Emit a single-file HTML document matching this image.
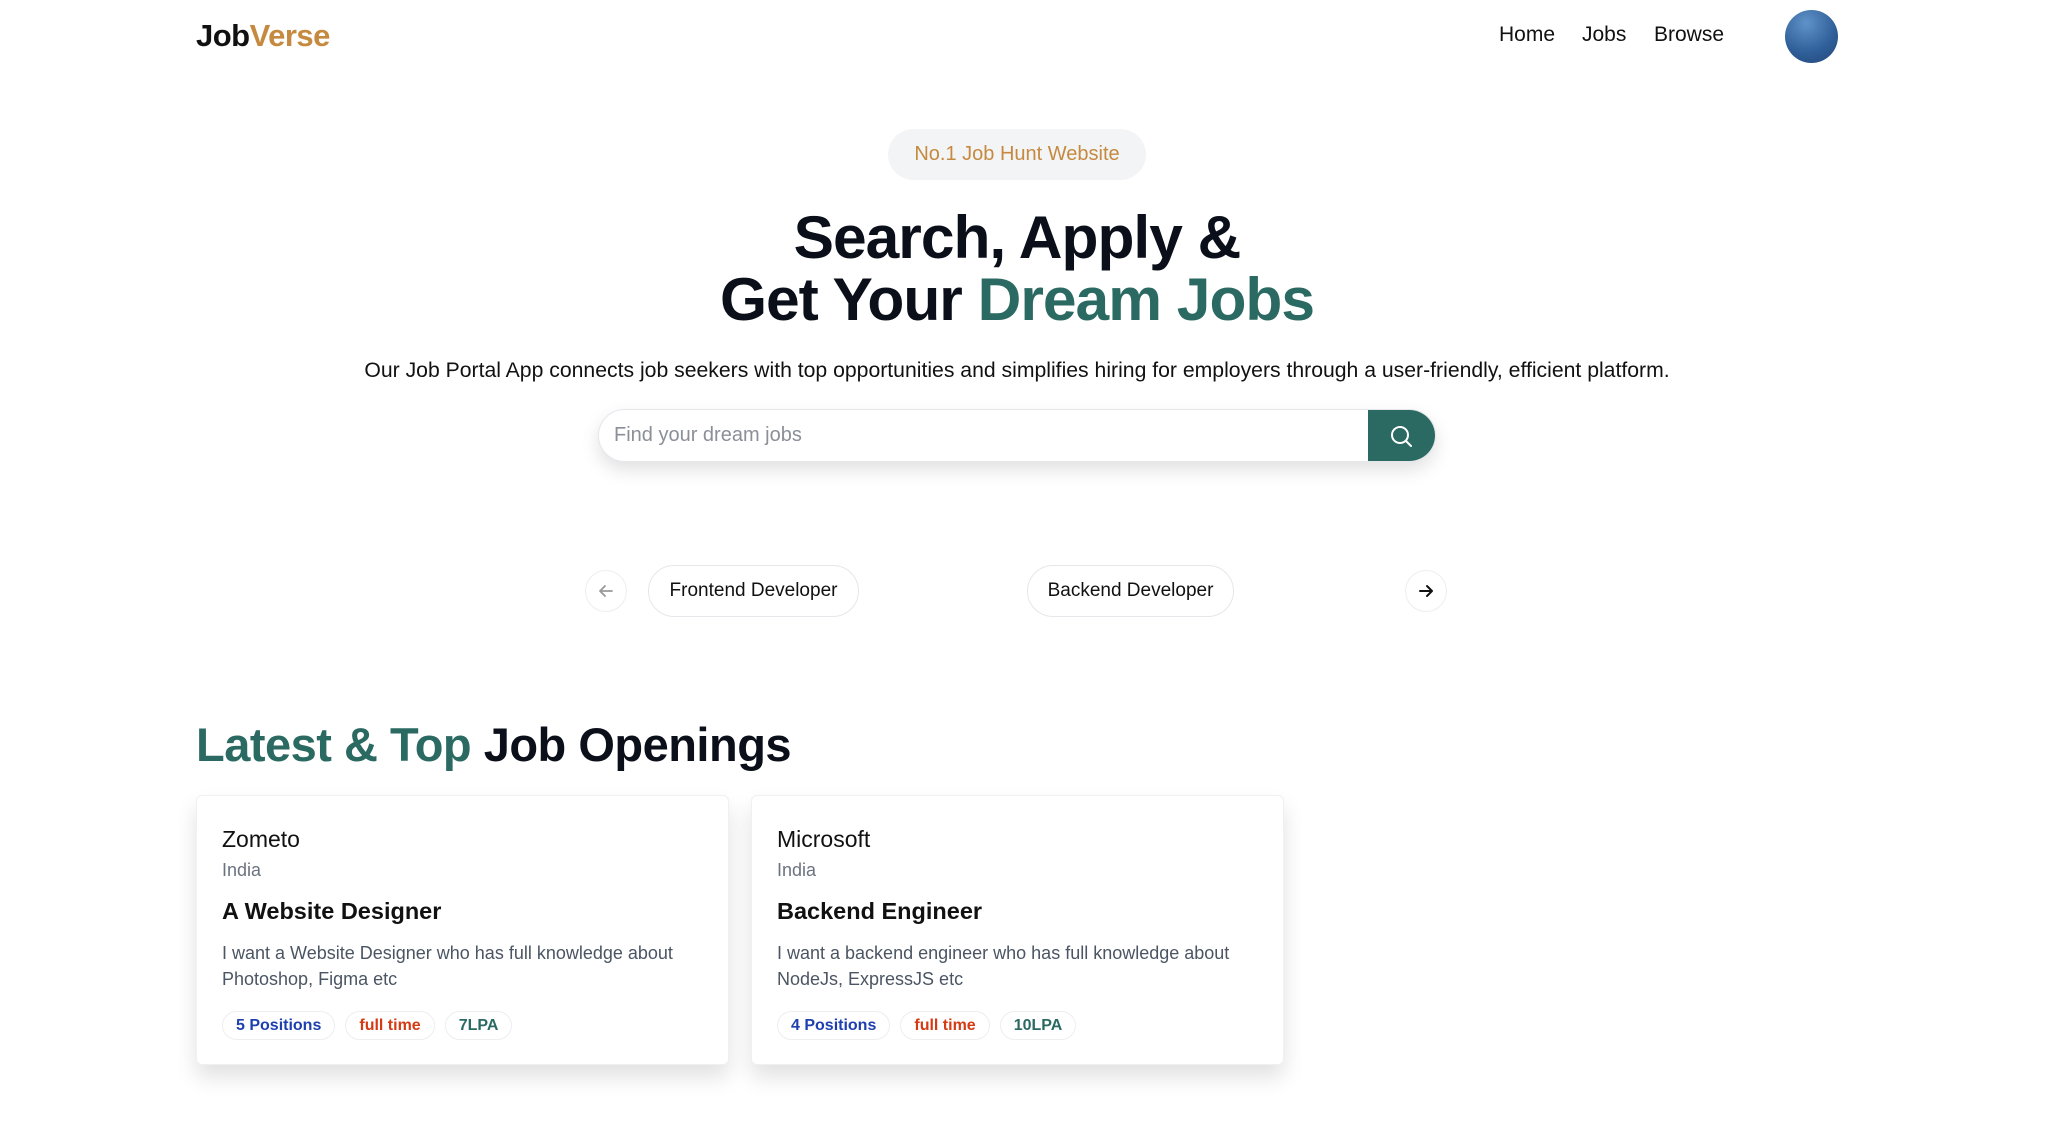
<!DOCTYPE html>
<html><head><style>
*{box-sizing:border-box;margin:0;padding:0}
body{width:2048px;height:1130px;background:#fff;font-family:"Liberation Sans",sans-serif;color:#111;position:relative;overflow:hidden}
.a{position:absolute}
.logo{left:196px;top:18px;font-size:31px;font-weight:700;letter-spacing:-0.5px}
.nav{top:23px;font-size:21px;font-weight:500}
.av{left:1785px;top:10px;width:53px;height:53px;border-radius:50%;background:radial-gradient(circle at 40% 25%,#5f93c8,#2e5d97 60%,#24487a)}
.badge{left:888px;top:129px;width:258px;height:51px;border-radius:26px;background:#f3f4f6;color:#c58a3f;font-size:20px;font-weight:500;text-align:center;line-height:51px}
h1{position:absolute;left:0;width:2034px;top:206px;text-align:center;font-size:60.5px;font-weight:800;line-height:62px;letter-spacing:-1px;color:#0b0f1a}
.g{color:#2b6a62}
.p{left:0;width:2034px;top:359px;text-align:center;font-size:21.2px}
.search{left:598px;top:409px;width:838px;height:53px;border:1px solid #e5e7eb;border-radius:27px;box-shadow:0 8px 18px rgba(0,0,0,.12);overflow:hidden;background:#fff}
.search span{position:absolute;left:15px;top:14px;font-size:20px;color:#8a8f98}
.search .b{position:absolute;right:0;top:0;width:67px;height:53px;background:#2b6a62}
.circ{width:42px;height:42px;border-radius:50%;border:1px solid #eceef0;background:#fff}
.chip{top:565px;height:52px;border:1px solid #e5e7eb;border-radius:26px;font-size:19px;font-weight:500;text-align:center;line-height:50px}
h2{position:absolute;left:196px;top:717px;font-size:47px;font-weight:800;letter-spacing:-0.5px;color:#0b0f1a}
.card{width:533px;height:270px;border:1px solid #f0f0f0;border-radius:6px;box-shadow:0 12px 22px rgba(0,0,0,.12);background:#fff}
.card .c{position:absolute;left:25px;top:30px;font-size:23px}
.card .i{position:absolute;left:25px;top:64px;font-size:18px;color:#6b7280}
.card .t{position:absolute;left:25px;top:102px;font-size:23.5px;font-weight:700}
.card .d{position:absolute;left:25px;top:144px;font-size:18px;line-height:26px;color:#4b5563;width:500px}
.tags{position:absolute;left:25px;top:215px;display:flex;gap:10px}
.tag{height:29px;border:1px solid #eceef0;border-radius:15px;padding:0 13px;font-size:16px;font-weight:700;line-height:27px}
</style></head><body>
<div class="a logo">Job<span style="color:#c58a3f">Verse</span></div>
<div class="a nav" style="left:1499px">Home</div>
<div class="a nav" style="left:1582px">Jobs</div>
<div class="a nav" style="left:1654px">Browse</div>
<div class="a av"></div>
<div class="a badge">No.1 Job Hunt Website</div>
<h1>Search, Apply &amp;<br>Get Your <span class="g">Dream Jobs</span></h1>
<div class="a p">Our Job Portal App connects job seekers with top opportunities and simplifies hiring for employers through a user-friendly, efficient platform.</div>
<div class="a search"><span>Find your dream jobs</span><div class="b"><svg width="67" height="53" viewBox="0 0 67 53"><circle cx="32" cy="25" r="8" fill="none" stroke="#fff" stroke-width="2"/><path d="M38 31l5 5" stroke="#fff" stroke-width="2" stroke-linecap="round"/></svg></div></div>
<div class="a circ" style="left:585px;top:570px"><svg width="40" height="40" viewBox="0 0 40 40"><path d="M26 20H14M19 15l-5 5 5 5" fill="none" stroke="#999" stroke-width="1.8" stroke-linecap="round" stroke-linejoin="round"/></svg></div>
<div class="a chip" style="left:648px;width:211px">Frontend Developer</div>
<div class="a chip" style="left:1027px;width:207px">Backend Developer</div>
<div class="a circ" style="left:1405px;top:570px"><svg width="40" height="40" viewBox="0 0 40 40"><path d="M14 20h12M21 15l5 5-5 5" fill="none" stroke="#111" stroke-width="2" stroke-linecap="round" stroke-linejoin="round"/></svg></div>
<h2><span class="g">Latest &amp; Top</span> Job Openings</h2>
<div class="a card" style="left:196px;top:795px"><div class="c">Zometo</div><div class="i">India</div><div class="t">A Website Designer</div><div class="d">I want a Website Designer who has full knowledge about Photoshop, Figma etc</div><div class="tags"><div class="tag" style="color:#1e40af">5 Positions</div><div class="tag" style="color:#d43a14">full time</div><div class="tag" style="color:#2b6a62">7LPA</div></div></div>
<div class="a card" style="left:751px;top:795px"><div class="c">Microsoft</div><div class="i">India</div><div class="t">Backend Engineer</div><div class="d">I want a backend engineer who has full knowledge about NodeJs, ExpressJS etc</div><div class="tags"><div class="tag" style="color:#1e40af">4 Positions</div><div class="tag" style="color:#d43a14">full time</div><div class="tag" style="color:#2b6a62">10LPA</div></div></div>
</body></html>
